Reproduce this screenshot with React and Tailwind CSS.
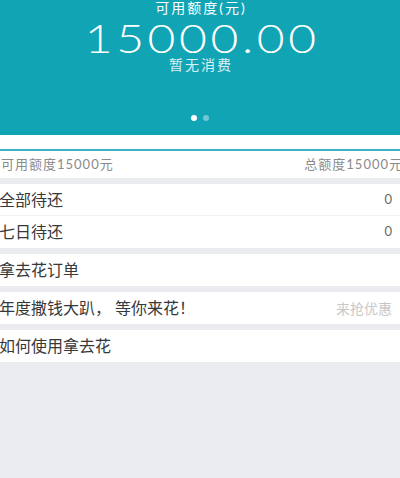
import React from 'react';

const font = { fontFamily: '"Lato", "Noto Sans CJK SC", sans-serif' };

const Row = ({ label, right, rightClass = 'text-[13px] text-[#666]', divider }) => (
    <div className={`flex items-center justify-between h-[32px] bg-white ${divider ? 'border-b border-[#f1f1f1]' : ''}`}>
        <span className="ml-[-1px] text-[16px] text-[#383838]">{label}</span>
        {right && <span className={`pr-[8px] ${rightClass}`}>{right}</span>}
    </div>
);

const App = () => {
    return (
        <div className="min-h-[478px] bg-[#ebecf0] overflow-hidden" style={font}>
            {/* banner */}
            <div className="h-[135px] bg-[#11a4b5] flex flex-col items-center text-white">
                <div className="text-[14px] leading-[16px] tracking-[2px] pl-[2px]">可用额度(元)</div>
                <div className="mt-[6px] h-[32px] leading-[32px] text-[40px] font-light tracking-[3px] pl-[3px] scale-x-[1.2]">
                    15000.00
                </div>
                <div className="mt-[3px] text-[14px] leading-[16px] tracking-[2px] pl-[2px] text-white/85">暂无消费</div>
                <div className="mt-[42px] flex gap-[6px]">
                    <span className="w-[6px] h-[6px] rounded-full bg-white"></span>
                    <span className="w-[6px] h-[6px] rounded-full bg-white/40"></span>
                </div>
            </div>

            <div className="h-[14px] bg-white"></div>
            <div className="h-[2px] bg-[#3bb4c4]"></div>
            <div className="flex items-center justify-between h-[27px] bg-white text-[13px] tracking-[1px] text-[#8a8a8a]">
                <span className="ml-[1px]">可用额度15000元</span>
                <span className="mr-[-3px]">总额度15000元</span>
            </div>

            <div className="mt-[6px]">
                <Row label="全部待还" right="0" divider />
                <Row label="七日待还" right="0" />
            </div>
            <div className="mt-[6px]">
                <Row label="拿去花订单" />
            </div>
            <div className="mt-[6px]">
                <Row label="年度撒钱大趴， 等你来花！" right="来抢优惠" rightClass="text-[14px] text-[#c8c8c8] pr-[6px]" />
            </div>
            <div className="mt-[6px]">
                <Row label="如何使用拿去花" />
            </div>
        </div>
    );
};

export default App;
